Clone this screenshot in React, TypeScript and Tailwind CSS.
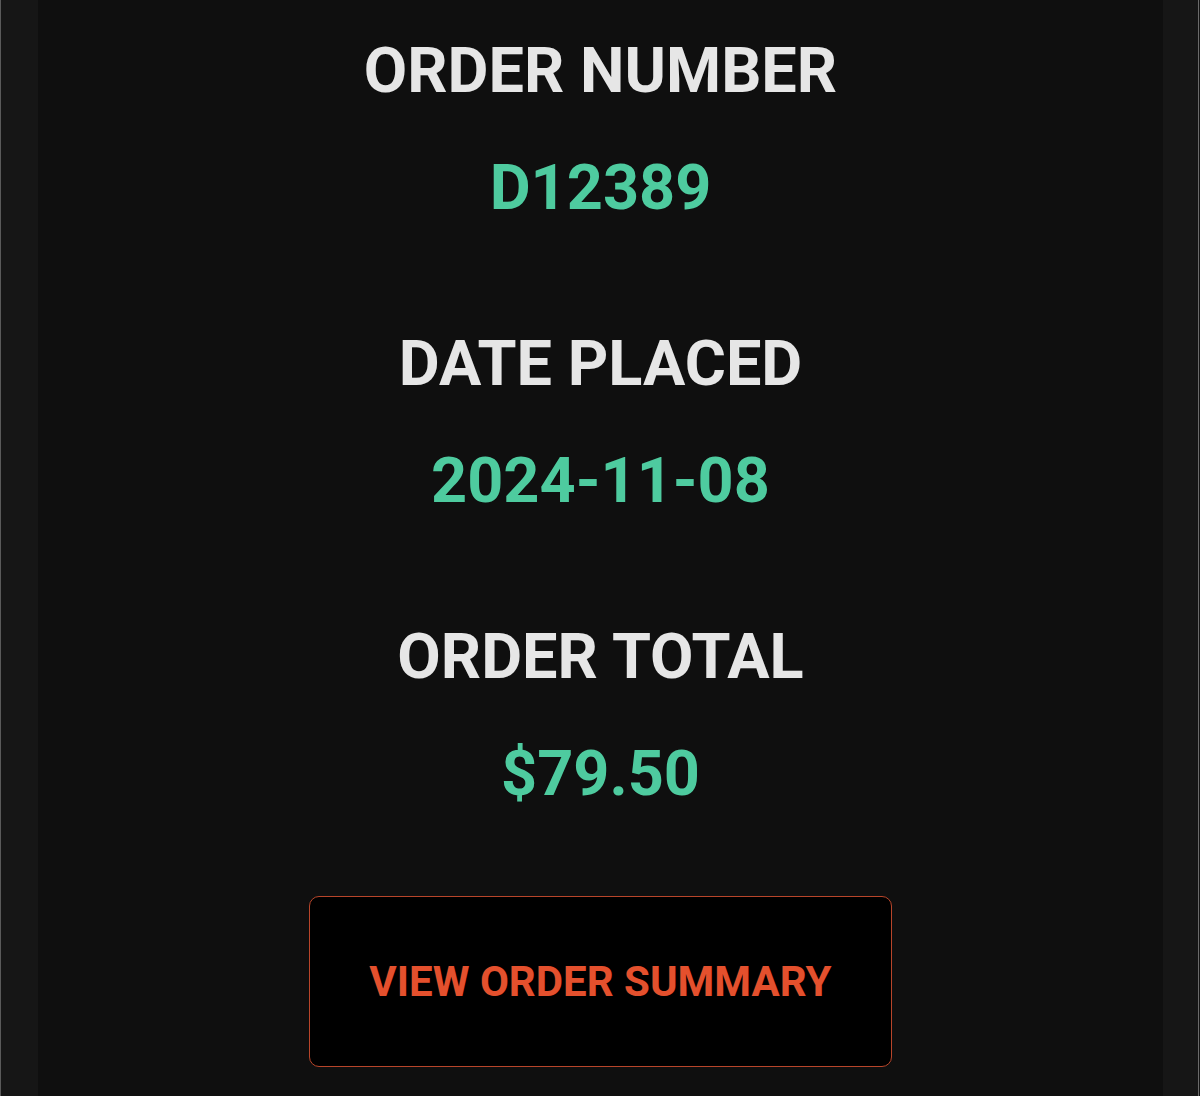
import React from "react";

const items = [
  { label: "ORDER NUMBER", value: "D12389" },
  { label: "DATE PLACED", value: "2024-11-08" },
  { label: "ORDER TOTAL", value: "$79.50" },
];

export default function App() {
  return (
    <div
      className="flex h-[1096px] w-[1200px] overflow-hidden bg-[#161616]"
      style={{ fontFamily: "Roboto, 'Liberation Sans', sans-serif" }}
    >
      <div className="w-[1px] bg-[#5a5a5a]" />
      <div className="w-[37px] bg-[#161616]" />
      <div className="flex flex-1 flex-col items-center bg-[#0f0f0f] pt-[33px]">
        {items.map((it, i) => (
          <div key={it.label} className={i === 0 ? "flex flex-col items-center" : "mt-[100px] flex flex-col items-center"}>
            <div className="text-[63px] font-bold leading-[76px] text-[#e6e6e6]">{it.label}</div>
            <div className="mt-[41px] text-[63px] font-bold leading-[76px] text-[#4ecb9f]">{it.value}</div>
          </div>
        ))}
        <button className="mt-[84px] flex h-[171px] w-[583px] items-center justify-center rounded-[10px] border-[1.5px] border-[#b8452a] bg-black text-[42px] font-bold text-[#e4502d]">
          VIEW ORDER SUMMARY
        </button>
      </div>
      <div className="w-[35px] bg-[#161616]" />
      <div className="w-[1px] bg-[#6a6a6a]" />
      <div className="w-[1px] bg-[#161616]" />
    </div>
  );
}
